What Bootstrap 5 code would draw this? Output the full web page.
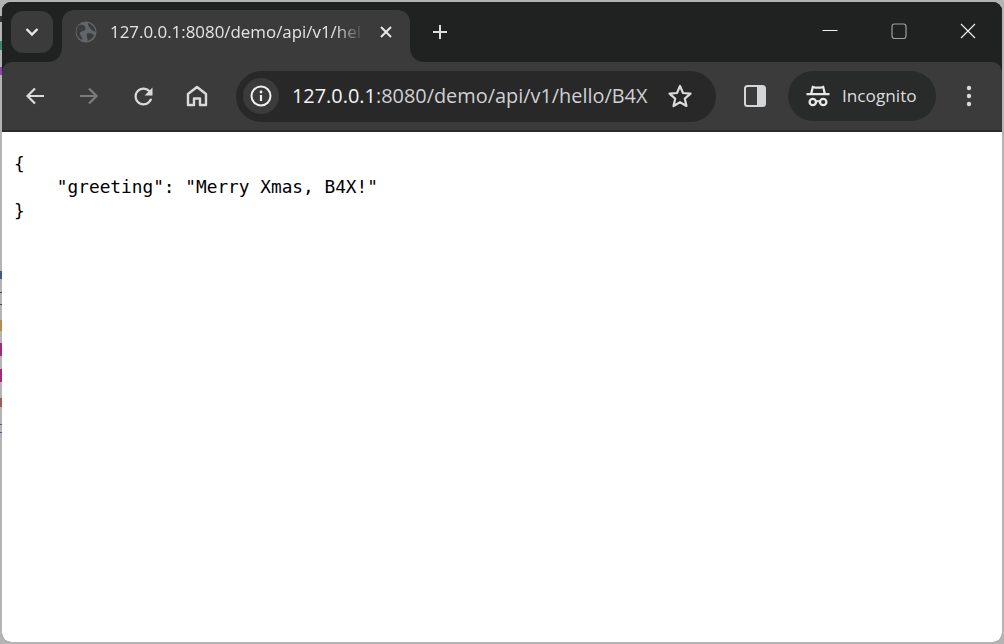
<!DOCTYPE html>
<html lang="en">
<head>
<meta charset="utf-8">
<title>127.0.0.1:8080/demo/api/v1/hello/B4X</title>
<link href="https://cdn.jsdelivr.net/npm/bootstrap@5.3.0/dist/css/bootstrap.min.css" rel="stylesheet">
<style>
html,body{height:100%;margin:0}
body{background:linear-gradient(180deg,#b4b4b4 0 16px,#333 16px 22px,#b4b4b4 22px 41px,#3a8a6a 41px 50px,#b4b4b4 50px 67px,#8a4aa8 67px 75px,#b4b4b4 75px 271px,#3b5a90 271px 279px,#b4b4b4 279px 292px,#444 292px 293px,#b4b4b4 293px 304px,#444 304px 305px,#b4b4b4 305px 320px,#b88a50 320px 331px,#b4b4b4 331px 343px,#a02a80 343px 356px,#b4b4b4 356px 369px,#a02a80 369px 382px,#b4b4b4 382px 398px,#a05a50 398px 407px,#b4b4b4 407px 424px,#7a3ab0 424px 425px,#b4b4b4 425px 432px,#7a3ab0 432px 433px,#b4b4b4 433px) 0 0/2px 100% no-repeat,#b4b4b4;padding:2px;font-family:"Open Sans","Liberation Sans",sans-serif;overflow:hidden}
.win{height:640px;width:1000px;border-radius:9px;overflow:hidden;background:#202222}
.strip{height:60px;background:#3b3b3b;flex:none}
.well-left{width:60px;background:#202222;border-bottom-right-radius:14px;padding:9px 0 0 9px;flex:none}
.tab-search{width:42px;height:42px;border-radius:12px;background:#3b3b3b}
.tab-col{width:348px;background:#202222;flex:none}
.tab-shape{height:52px;margin-top:8px;background:#3b3b3b;border-radius:12px 12px 0 0;padding-left:13px}
.tab-title{width:250px;margin-left:13px;color:#e3e3e3;font-size:16.9px;white-space:nowrap;overflow:hidden;-webkit-mask-image:linear-gradient(90deg,#000 90%,rgba(0,0,0,.15) 100%);mask-image:linear-gradient(90deg,#000 90%,rgba(0,0,0,.15) 100%)}
.tab-close{margin-left:19px}
.well-right{background:#202222;border-bottom-left-radius:14px}
.new-tab{margin-left:21px}
.caption{width:207px;padding-bottom:2px}
.cap-btn{width:69px}
.bar{height:68px;background:#3b3b3b;border-radius:10px 10px 0 0;flex:none;padding-left:6px}
.tool{width:54px;flex:none}
.omni{width:480px;height:51px;background:#282828;border-radius:26px;margin-left:12px;padding-left:7px;flex:none}
.chip{width:36px;height:36px;border-radius:50%;background:#3b3b3b;flex:none}
.url{margin-left:13px;color:#cfd1d2;font-size:19.9px;white-space:nowrap;width:357px}
.url b{font-weight:400;color:#f1f3f4}
.star-ic{margin-left:18px}
.side-btn{margin-left:28px}
.pill{width:148px;height:50px;border-radius:25px;background:#292a2a;margin-left:22px;padding-left:18px;color:#dcdedf;font-size:17.2px;flex:none}
.pill span{margin-left:12px}
.dots{margin-left:30px}
.rule{height:2px;background:#2a2b2b;flex:none}
.page-body{background:#fff;flex:1 1 auto}
.json{margin:0;padding:19.5px 0 0 12px;font-family:"DejaVu Sans Mono","Liberation Mono",monospace;font-size:17.8px;line-height:23.6px;color:#000;overflow:hidden}
svg{display:block;flex:none}
</style>
</head>
<body>
<div class="win d-flex flex-column">
  <div class="strip d-flex">
    <div class="well-left">
      <div class="tab-search d-flex align-items-center justify-content-center">
        <svg width="14" height="10" viewBox="0 0 14 10"><path d="M1.5 2 L7 7.5 L12.5 2" fill="none" stroke="#e8e8e8" stroke-width="2.4"/></svg>
      </div>
    </div>
    <div class="tab-col">
      <div class="tab-shape d-flex align-items-center pb-2">
        <svg width="22" height="22" viewBox="0 0 22 22"><circle cx="11" cy="11" r="10.5" fill="#62666c"/><path d="M4 4 C8 3 11 5 10.5 8 C10 10.5 6 9.5 5 12 C4.5 14 7 15 7.5 19 C4 18 1 14 1.5 10 C1.6 8 2.5 6 4 4Z M13 2 C17 3 20.5 7 20.5 11 C18 10 17 9.5 15.5 7.5 C14 6 13 4.5 13 2Z M12 12.5 C15 11 18 13 19 14.5 C18 17 15 19.5 12.5 20 C13 17.5 11 15 12 12.5Z" fill="#3b3b3b"/></svg>
        <div class="tab-title">127.0.0.1:8080/demo/api/v1/hello/B4X</div>
        <svg class="tab-close" width="14" height="14" viewBox="0 0 14 14"><path d="M2 2 L12 12 M12 2 L2 12" stroke="#e8e8e8" stroke-width="2"/></svg>
      </div>
    </div>
    <div class="well-right flex-grow-1 d-flex align-items-center justify-content-between">
      <svg class="new-tab" width="18" height="18" viewBox="0 0 18 18"><path d="M9 2 V16 M2 9 H16" stroke="#dedede" stroke-width="2"/></svg>
      <div class="caption d-flex align-items-center">
        <div class="cap-btn d-flex justify-content-center"><svg width="16" height="16" viewBox="0 0 16 16"><path d="M0.5 7.5 H15.5" stroke="#f2f2f2" stroke-width="1"/></svg></div>
        <div class="cap-btn d-flex justify-content-center"><svg width="16" height="16" viewBox="0 0 16 16"><rect x="1" y="1" width="14" height="14.5" rx="2.5" fill="none" stroke="#9d9e9e" stroke-width="1.2"/></svg></div>
        <div class="cap-btn d-flex justify-content-center"><svg width="16" height="16" viewBox="0 0 16 16"><path d="M1 1 L15 15 M15 1 L1 15" stroke="#f2f2f2" stroke-width="1.1"/></svg></div>
      </div>
    </div>
  </div>
  <div class="bar d-flex align-items-center">
    <div class="tool d-flex justify-content-center"><svg width="20" height="20" viewBox="0 0 20 20"><path d="M19 10 H2.5 M10 2.5 L2.5 10 L10 17.5" fill="none" stroke="#d9dadb" stroke-width="2.2"/></svg></div>
    <div class="tool d-flex justify-content-center"><svg width="20" height="20" viewBox="0 0 20 20"><path d="M1 10 H17.5 M10 2.5 L17.5 10 L10 17.5" fill="none" stroke="#7b7c7d" stroke-width="2.2"/></svg></div>
    <div class="tool d-flex justify-content-center"><svg width="27" height="27" viewBox="0 0 24 24"><path fill="#d9dadb" d="M17.65 6.35C16.2 4.9 14.21 4 12 4c-4.42 0-7.99 3.58-7.99 8s3.57 8 7.99 8c3.73 0 6.84-2.55 7.73-6h-2.08c-.82 2.33-3.04 4-5.65 4-3.31 0-6-2.69-6-6s2.69-6 6-6c1.66 0 3.14.69 4.22 1.78L13 11h7V4l-2.35 2.35z"/></svg></div>
    <div class="tool d-flex justify-content-center"><svg width="22" height="22" viewBox="0 0 22 22"><path d="M11 2 L20 9 V20 H14 V13.5 H8 V20 H2 V9Z" fill="none" stroke="#d9dadb" stroke-width="2.4" stroke-linejoin="round"/></svg></div>
    <div class="omni d-flex align-items-center">
      <div class="chip d-flex align-items-center justify-content-center">
        <svg width="22" height="22" viewBox="0 0 22 22"><circle cx="11" cy="11" r="9.5" fill="none" stroke="#eef0f1" stroke-width="2"/><path d="M11 10 V16" stroke="#eef0f1" stroke-width="2.2"/><circle cx="11" cy="7" r="1.4" fill="#eef0f1"/></svg>
      </div>
      <div class="url"><b>127.0.0.1</b>:8080/demo/api/v1/hello/B4X</div>
      <svg class="star-ic" width="26" height="26" viewBox="0 0 26 26"><path d="M13 3 L16 10 L23.5 10.7 L17.8 15.7 L19.5 23 L13 19.2 L6.5 23 L8.2 15.7 L2.5 10.7 L10 10Z" fill="none" stroke="#d9dadb" stroke-width="2.2" stroke-linejoin="round"/></svg>
    </div>
    <svg class="side-btn" width="22" height="22" viewBox="0 0 22 22"><rect x="1" y="1" width="20" height="20" rx="2.5" fill="none" stroke="#d4d5d6" stroke-width="2"/><path d="M13 1 H18.5 A2.5 2.5 0 0 1 21 3.5 V18.5 A2.5 2.5 0 0 1 18.5 21 H13Z" fill="#d4d5d6"/></svg>
    <div class="pill d-flex align-items-center">
      <svg width="24" height="24" viewBox="0 0 24 24"><path d="M6 1.5 L9 2.5 H15 L18 1.5 L19.8 9 H23.5 V11.2 H0.5 V9 H4.2Z M7.6 4.3 L6.6 9 H17.4 L16.4 4.3 L15 4.7 H9Z" fill="#e6e7e8" fill-rule="evenodd"/><circle cx="6.8" cy="18" r="3.2" fill="none" stroke="#e6e7e8" stroke-width="2.3"/><circle cx="17.2" cy="18" r="3.2" fill="none" stroke="#e6e7e8" stroke-width="2.3"/><path d="M10 17.2 H14" stroke="#e6e7e8" stroke-width="2"/></svg>
      <span>Incognito</span>
    </div>
    <svg class="dots" width="6" height="22" viewBox="0 0 6 22"><circle cx="3" cy="3" r="2.2" fill="#d9dadb"/><circle cx="3" cy="11" r="2.2" fill="#d9dadb"/><circle cx="3" cy="19" r="2.2" fill="#d9dadb"/></svg>
  </div>
  <div class="rule"></div>
  <div class="page-body">
<pre class="json">{
    "greeting": "Merry Xmas, B4X!"
}</pre>
  </div>
</div>
<script src="https://cdn.jsdelivr.net/npm/bootstrap@5.3.0/dist/js/bootstrap.bundle.min.js"></script>
</body>
</html>
